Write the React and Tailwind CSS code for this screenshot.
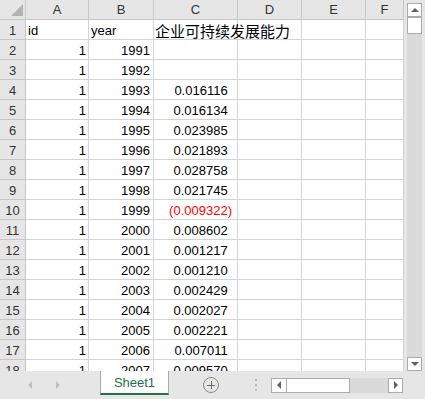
import React from "react";

const data = [
  ["id", "year", "企业可持续发展能力"],
  [1, 1991, ""],
  [1, 1992, ""],
  [1, 1993, "0.016116"],
  [1, 1994, "0.016134"],
  [1, 1995, "0.023985"],
  [1, 1996, "0.021893"],
  [1, 1997, "0.028758"],
  [1, 1998, "0.021745"],
  [1, 1999, "(0.009322)"],
  [1, 2000, "0.008602"],
  [1, 2001, "0.001217"],
  [1, 2002, "0.001210"],
  [1, 2003, "0.002429"],
  [1, 2004, "0.002027"],
  [1, 2005, "0.002221"],
  [1, 2006, "0.007011"],
  [1, 2007, "0.009570"],
];

const cell = "h-5 border-r border-b border-[#d4d4d4] leading-[19px] pt-[1px] overflow-visible whitespace-nowrap";
const hdr = "h-5 border-r border-b border-[#c6c6c6] bg-[#e6e6e6] text-[#333] leading-[19px] text-center";

function Row({ r, i }) {
  const isHeader = i === 0;
  const c = r[2];
  return (
    <>
      <div className={`${hdr} pt-[1px]`}>{i + 1}</div>
      <div className={`${cell} ${isHeader ? "text-left pl-[2px]" : "text-right pr-[2px]"}`}>{r[0]}</div>
      <div className={`${cell} ${isHeader ? "text-left pl-[2px]" : "text-right pr-[3px]"}`}>{r[1]}</div>
      {isHeader ? (
        <div
          className={`${cell} text-left pl-[1px] text-[15px] relative z-10`}
          style={{ fontFamily: '"Noto Sans CJK SC", sans-serif' }}
        >
          {c}
        </div>
      ) : c.startsWith("(") ? (
        <div className={`${cell} text-right pr-[5px] text-[#ff0000]`}>{c}</div>
      ) : (
        <div className={`${cell} text-right pr-[5px]`}>
          {c}
          {c && <span className="invisible">)</span>}
        </div>
      )}
      <div className={cell}></div>
      <div className={cell}></div>
      <div className={cell}></div>
    </>
  );
}

export default function App() {
  return (
    <div
      className="w-[425px] h-[399px] overflow-hidden bg-[#e6e6e6] flex flex-col text-[13px] text-black"
      style={{ fontFamily: '"Liberation Sans", Arial, sans-serif' }}
    >
      <div className="flex h-[371px]">
        <div className="w-[404px] h-[371px] overflow-hidden bg-white">
          <div className="grid grid-cols-[26px_63px_65px_84px_64px_64px_38px] auto-rows-[20px]">
            {/* corner */}
            <div className="h-5 border-r border-b border-[#c6c6c6] bg-[#e6e6e6]">
              <svg width="25" height="19" viewBox="0 0 25 19" className="block">
                <polygon points="11,16 23,16 23,4" fill="#b4b4b4" />
              </svg>
            </div>
            {["A", "B", "C", "D", "E", "F"].map((l) => (
              <div key={l} className={hdr}>{l}</div>
            ))}
            {data.map((r, i) => (
              <Row key={i} r={r} i={i} />
            ))}
          </div>
        </div>
        {/* vertical scrollbar */}
        <div className="w-[21px] h-[371px] flex flex-col pl-[3px]">
          <div className="mt-[3px] w-[15px] h-[14px] bg-white border border-[#ababab] flex items-center justify-center">
            <div className="w-0 h-0 border-x-[4px] border-x-transparent border-b-[4px] border-b-[#606060]"></div>
          </div>
          <div className="w-[15px] flex-1 bg-[#dadada] flex flex-col">
            <div className="h-[17px] bg-white border border-[#ababab]"></div>
          </div>
          <div className="w-[15px] h-[14px] bg-white border border-[#ababab] flex items-center justify-center">
            <div className="w-0 h-0 border-x-[4px] border-x-transparent border-t-[4px] border-t-[#606060]"></div>
          </div>
        </div>
      </div>
      {/* bottom bar */}
      <div className="h-[28px] flex items-start">
        <div className="w-[100px] h-[28px] flex items-center">
          <div className="ml-[28px] w-0 h-0 border-y-[4px] border-y-transparent border-r-[4px] border-r-[#c0c0c0]"></div>
          <div className="ml-[24px] w-0 h-0 border-y-[4px] border-y-transparent border-l-[4px] border-l-[#c0c0c0]"></div>
        </div>
        <div className="w-[69px] h-[24px] bg-white border-x border-[#ababab] border-b-2 border-b-[#217346] flex items-center justify-center text-[#217346] leading-[20px] pt-[1px]">
          Sheet1
        </div>
        <div className="h-[28px] flex items-center">
          <div className="ml-[34px] w-[16px] h-[16px] rounded-full border border-[#8a8a8a] flex items-center justify-center relative">
            <div className="absolute w-[8px] h-px bg-[#6e6e6e]"></div>
            <div className="absolute w-px h-[8px] bg-[#6e6e6e]"></div>
          </div>
          <div className="ml-[36px] flex flex-col gap-[3px]">
            <div className="w-[2px] h-[2px] bg-[#b8b8b8]"></div>
            <div className="w-[2px] h-[2px] bg-[#b8b8b8]"></div>
            <div className="w-[2px] h-[2px] bg-[#b8b8b8]"></div>
          </div>
          <div className="ml-[14px] w-[132px] h-[15px] flex bg-[#dadada]">
            <div className="w-[16px] h-[15px] bg-white border border-[#ababab] flex items-center justify-center">
              <div className="w-0 h-0 border-y-[4px] border-y-transparent border-r-[4px] border-r-[#606060]"></div>
            </div>
            <div className="w-[63px] h-[15px] bg-white border border-l-0 border-[#ababab]"></div>
            <div className="flex-1"></div>
            <div className="w-[15px] h-[15px] bg-white border border-[#ababab] flex items-center justify-center">
              <div className="w-0 h-0 border-y-[4px] border-y-transparent border-l-[4px] border-l-[#606060]"></div>
            </div>
          </div>
        </div>
      </div>
    </div>
  );
}
